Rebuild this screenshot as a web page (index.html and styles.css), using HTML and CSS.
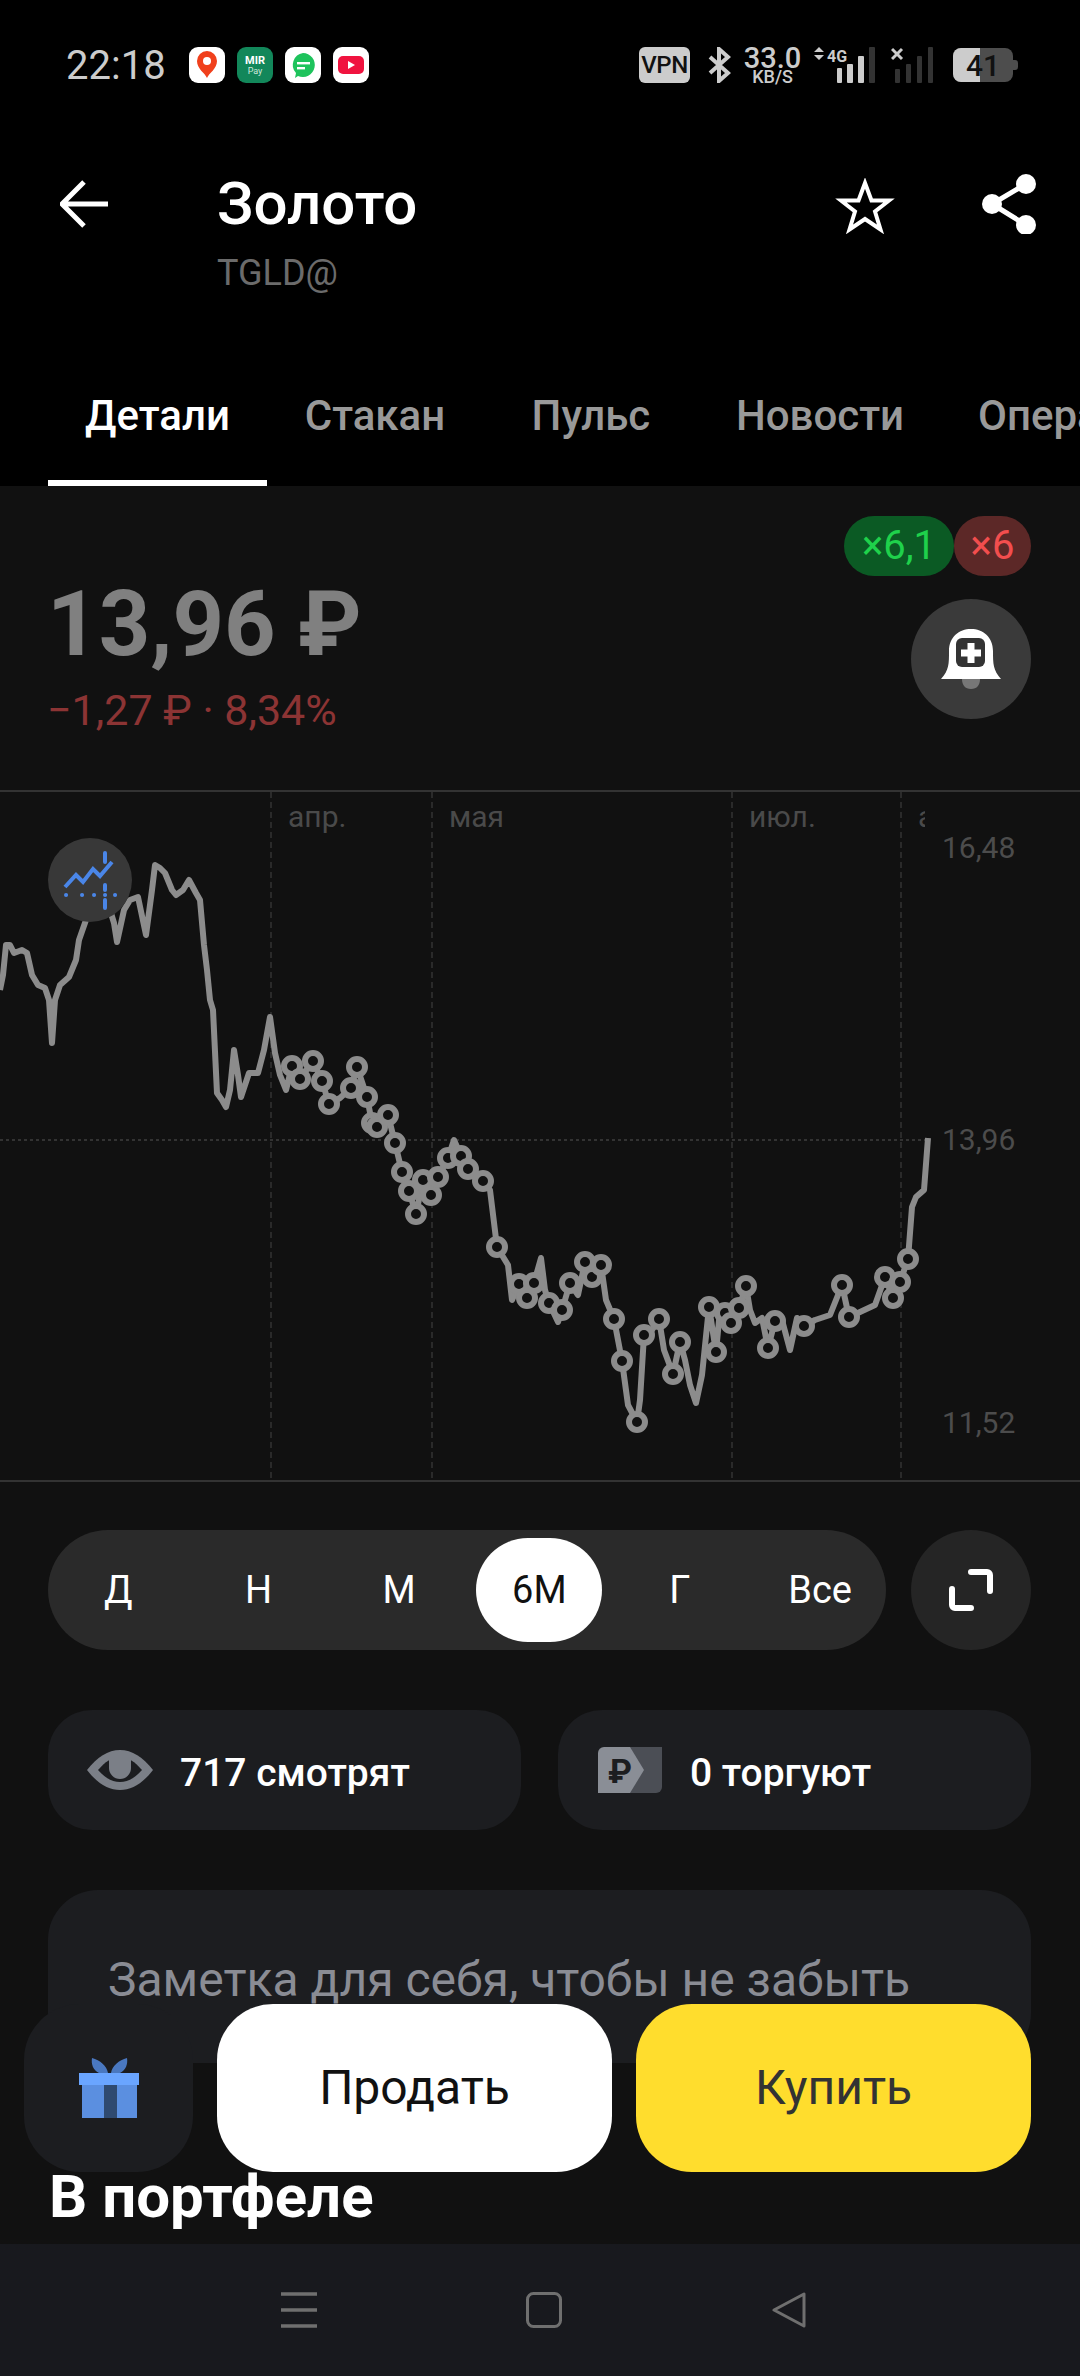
FILE: index.html
```html
<!DOCTYPE html>
<html>
<head>
  <meta charset="utf-8">
  <link rel="stylesheet" href="styles.css">
</head>
<body>
  <div class="screen">

    <div class="status-bar">
      <span class="time">22:18</span>
      <div class="app-icons">
        <div class="app-icon">
          <svg viewBox="0 0 36 36"><path d="M18 31c-2-5-10-9-10-17a10 10 0 0 1 20 0c0 8-8 12-10 17z" fill="#f0401c"/><circle cx="18" cy="14" r="4" fill="#fff"/></svg>
        </div>
        <div class="app-icon mir">
          <svg viewBox="0 0 36 36"><text x="18" y="17" class="mir-top">MIR</text><text x="18" y="27" class="mir-bottom">Pay</text></svg>
        </div>
        <div class="app-icon">
          <svg viewBox="0 0 36 36"><path d="M18 6a12 12 0 1 1-5 23l-3 2 1-5A12 12 0 0 1 18 6z" fill="#1ec35c"/><rect x="12" y="15" width="13" height="2.4" fill="#fff"/><rect x="12" y="20" width="8" height="2.4" fill="#fff"/></svg>
        </div>
        <div class="app-icon">
          <svg viewBox="0 0 36 36"><rect x="5" y="9" width="26" height="18" rx="5" fill="#f0133f"/><path d="M15 14l7 4-7 4z" fill="#fff"/></svg>
        </div>
      </div>
      <div class="sys-icons">
        <span class="vpn">VPN</span>
        <svg class="bt" viewBox="0 0 23 36"><path d="M2 10l18 16-9 8V2l9 8L2 26" fill="none" stroke="#ccc" stroke-width="4"/></svg>
        <div class="speed">
          <span class="speed-num">33.0</span>
          <span class="speed-unit">KB/S</span>
        </div>
        <svg class="signal" viewBox="0 0 62 36">
          <path d="M0 5l5-5 5 5zM0 8l5 5 5-5z" fill="#ccc"/>
          <text x="13" y="15" class="net">4G</text>
          <rect x="23" y="21" width="5" height="15" rx="1" fill="#ccc"/>
          <rect x="33" y="17" width="6" height="19" rx="1" fill="#ccc"/>
          <rect x="44" y="9" width="6" height="27" rx="1" fill="#ccc"/>
          <rect x="55" y="0" width="6" height="36" rx="1" fill="#333"/>
        </svg>
        <svg class="signal-off" viewBox="0 0 42 36">
          <path d="M1 2l10 10M11 2L1 12" stroke="#ccc" stroke-width="3"/>
          <rect x="4" y="22" width="5" height="14" rx="1" fill="#333"/>
          <rect x="15" y="17" width="5" height="19" rx="1" fill="#333"/>
          <rect x="26" y="9" width="5" height="27" rx="1" fill="#333"/>
          <rect x="37" y="0" width="5" height="36" rx="1" fill="#333"/>
        </svg>
        <div class="battery">
          <div class="battery-fill"></div>
          <span class="battery-num">41</span>
        </div>
      </div>
    </div>

    <div class="toolbar">
      <svg class="back" viewBox="0 0 48 48"><path d="M48 24H3M24 2L2 24l22 22" fill="none" stroke="#fff" stroke-width="5"/></svg>
      <div class="titles">
        <div class="title">Золото</div>
        <div class="ticker">TGLD@</div>
      </div>
      <svg class="star" viewBox="0 0 60 56"><path d="M30 5l6.500 17.500h17.500L40 33.500l5.500 18L30 41l-15.500 10.500 5.500-18L6 22.500h17.500z" fill="none" stroke="#fff" stroke-width="4"/></svg>
      <svg class="share" viewBox="0 0 56 60"><path d="M45 10L11 30l34 21" fill="none" stroke="#fff" stroke-width="5"/><circle cx="45" cy="10" r="10" fill="#fff"/><circle cx="11" cy="30" r="10" fill="#fff"/><circle cx="45" cy="51" r="10" fill="#fff"/></svg>
    </div>

    <div class="tabs">
      <div class="tab active">Детали</div>
      <div class="tab">Стакан</div>
      <div class="tab">Пульс</div>
      <div class="tab">Новости</div>
      <div class="tab">Операции</div>
    </div>

    <div class="quote">
      <div class="prices">
        <div class="price">13,96 ₽</div>
        <div class="change">−1,27 ₽ · 8,34%</div>
      </div>
      <div class="quote-side">
        <div class="badges">
          <span class="badge long">×6,1</span>
          <span class="badge short">×6</span>
        </div>
        <div class="round-btn bell">
          <svg viewBox="0 0 60 60">
            <path d="M0 50C8 41 8 35 8 22 8 8 18 0 30 0s22 8 22 22c0 13 0 19 8 28z" fill="#fff"/>
            <rect x="15" y="9" width="29" height="29" rx="6" fill="#333"/>
            <path d="M30 14v20M20 24h20" stroke="#fff" stroke-width="7"/>
            <path d="M21 50h18c0 6-3 10-9 10s-9-4-9-10z" fill="#777"/>
          </svg>
        </div>
      </div>
    </div>

    <div class="chart">
      <svg viewBox="0 792 1080 688">
        <g class="grid-line">
          <line x1="271" y1="792" x2="271" y2="1480"/>
          <line x1="432" y1="792" x2="432" y2="1480"/>
          <line x1="732" y1="792" x2="732" y2="1480"/>
          <line x1="901" y1="792" x2="901" y2="1480"/>
          <line class="dots" x1="0" y1="1140" x2="925" y2="1140"/>
        </g>
        <g class="month">
          <text x="288" y="827">апр.</text>
          <text x="449" y="827">мая</text>
          <text x="749" y="827">июл.</text>
        </g>
        <svg x="918" y="792" width="7" height="60" viewBox="918 792 7 60"><text x="918" y="827" class="month-cut">а</text></svg>
        <g class="axis">
          <text x="942" y="858">16,48</text>
          <text x="942" y="1150">13,96</text>
          <text x="942" y="1433">11,52</text>
        </g>
        <polyline class="line" points="0,990 3,975 6,945 10,945 14,953 22,950 27,953 32,975 38,985 45,988 49,1000 52,1043 55,1000 60,985 69,977 76,960 79,940 86,920 100,905 110,910 114,923 117,942 124,910 130,900 138,897 146,935 152,890 155,865 160,868 165,873 172,890 176,895 183,890 189,880 196,893 200,900 204,945 207,970 210,1000 213,1010 217,1093 222,1100 226,1107 230,1090 234,1050 238,1075 241,1097 245,1085 249,1073 258,1073 264,1050 270,1017 275,1053 280,1075 286,1090 292,1066 300,1079 313,1061 322,1081 329,1104 340,1098 351,1088 357,1067 367,1097 372,1123 377,1127 388,1115 395,1143 402,1172 409,1191 416,1214 423,1180 431,1195 438,1177 448,1158 454,1140 461,1156 468,1169 483,1181 490,1190 497,1247 508,1265 512,1300 519,1284 527,1298 534,1283 541,1258 545,1290 549,1303 558,1322 562,1310 570,1283 578,1295 585,1262 592,1277 601,1265 606,1300 614,1319 618,1340 622,1361 628,1405 637,1422 640,1400 644,1335 652,1330 659,1319 664,1350 673,1374 680,1342 685,1360 690,1385 696,1403 702,1375 709,1307 716,1352 720,1310 725,1313 731,1323 739,1308 746,1286 750,1310 755,1323 762,1318 768,1348 775,1321 782,1320 790,1350 797,1318 804,1326 815,1320 830,1315 842,1285 849,1317 860,1312 875,1305 885,1277 893,1298 900,1282 908,1259 912,1207 916,1197 924,1190 928,1138"/>
        <g class="marks">
          <circle cx="292" cy="1066" r="8"/><circle cx="300" cy="1079" r="8"/><circle cx="313" cy="1061" r="8"/><circle cx="322" cy="1081" r="8"/>
          <circle cx="329" cy="1104" r="8"/><circle cx="351" cy="1088" r="8"/><circle cx="357" cy="1067" r="8"/><circle cx="367" cy="1097" r="8"/>
          <circle cx="372" cy="1123" r="8"/><circle cx="377" cy="1127" r="8"/><circle cx="388" cy="1115" r="8"/><circle cx="395" cy="1143" r="8"/>
          <circle cx="402" cy="1172" r="8"/><circle cx="409" cy="1191" r="8"/><circle cx="416" cy="1214" r="8"/><circle cx="423" cy="1180" r="8"/>
          <circle cx="431" cy="1195" r="8"/><circle cx="438" cy="1177" r="8"/><circle cx="448" cy="1158" r="8"/><circle cx="461" cy="1156" r="8"/>
          <circle cx="468" cy="1169" r="8"/><circle cx="483" cy="1181" r="8"/><circle cx="497" cy="1247" r="8"/><circle cx="519" cy="1284" r="8"/>
          <circle cx="527" cy="1298" r="8"/><circle cx="534" cy="1283" r="8"/><circle cx="549" cy="1303" r="8"/><circle cx="562" cy="1310" r="8"/>
          <circle cx="570" cy="1283" r="8"/><circle cx="585" cy="1262" r="8"/><circle cx="592" cy="1277" r="8"/><circle cx="601" cy="1265" r="8"/>
          <circle cx="614" cy="1319" r="8"/><circle cx="622" cy="1361" r="8"/><circle cx="637" cy="1422" r="8"/><circle cx="644" cy="1335" r="8"/>
          <circle cx="659" cy="1319" r="8"/><circle cx="673" cy="1374" r="8"/><circle cx="680" cy="1342" r="8"/><circle cx="709" cy="1307" r="8"/>
          <circle cx="716" cy="1352" r="8"/><circle cx="725" cy="1313" r="8"/><circle cx="731" cy="1323" r="8"/><circle cx="739" cy="1308" r="8"/>
          <circle cx="746" cy="1286" r="8"/><circle cx="768" cy="1348" r="8"/><circle cx="775" cy="1321" r="8"/><circle cx="804" cy="1326" r="8"/>
          <circle cx="842" cy="1285" r="8"/><circle cx="849" cy="1317" r="8"/><circle cx="885" cy="1277" r="8"/><circle cx="893" cy="1298" r="8"/>
          <circle cx="900" cy="1282" r="8"/><circle cx="908" cy="1259" r="8"/>
        </g>
        <circle cx="90" cy="880" r="42" fill="#383838"/>
        <polyline class="trend" points="65,887 76,875 83,882 93,869 100,876 112,862"/>
        <path class="trend-dots" d="M105 853v9M105 885v5M105 900v8M66 895h.1M82 895h.1M94 895h.1M105 895h.1M115 895h.1"/>
      </svg>
    </div>

    <div class="range-row">
      <div class="periods">
        <div class="period">Д</div>
        <div class="period">Н</div>
        <div class="period">М</div>
        <div class="period active"><span>6М</span></div>
        <div class="period">Г</div>
        <div class="period">Все</div>
      </div>
      <div class="round-btn expand">
        <svg viewBox="0 0 44 42"><path d="M22 3h16a3 3 0 0 1 3 3v16M3 20v16a3 3 0 0 0 3 3h16" fill="none" stroke="#fff" stroke-width="6" stroke-linecap="round"/></svg>
      </div>
    </div>

    <div class="stats">
      <div class="stat">
        <svg class="eye" viewBox="0 0 66 40">
          <path d="M0 20C10 7 21 0 33 0s23 7 33 20C56 33 45 40 33 40S10 33 0 20z" fill="#7b7f87"/>
          <path d="M11 20c7-8 14-13 22-13s15 5 22 13c-7 8-14 12-22 12s-15-4-22-12z" fill="#1c1d20"/>
          <path d="M22 5h22v13a11 11 0 0 1-22 0z" fill="#7b7f87"/>
        </svg>
        <span>717 смотрят</span>
      </div>
      <div class="stat">
        <svg class="rub" viewBox="0 0 64 46">
          <path d="M20 0h44v40a6 6 0 0 1-6 6H20z" fill="#4b4e55"/>
          <path d="M0 6a6 6 0 0 1 6-6h26l14 23-14 23H0z" fill="#8a8e96"/>
          <text x="10" y="36" class="rub-sign">₽</text>
        </svg>
        <span>0 торгуют</span>
      </div>
    </div>

    <div class="note">Заметка для себя, чтобы не забыть</div>

    <h2 class="section-title">В портфеле</h2>

    <div class="actions">
      <div class="gift-btn">
        <svg viewBox="0 0 60 60">
          <path d="M13 0c8 2 15 8 16 15h-9C14 12 12 6 13 0zM48 0c-8 2-15 8-16 15h9c6-3 8-9 7-15z" fill="#4a78c0"/>
          <rect x="3" y="27" width="55" height="33" fill="#5b8fe0"/>
          <rect x="25" y="27" width="13" height="33" fill="#2f4a70"/>
          <rect y="15" width="60" height="12" fill="#6aa5ff"/>
        </svg>
      </div>
      <div class="action sell">Продать</div>
      <div class="action buy">Купить</div>
    </div>

    <div class="nav-bar">
      <svg viewBox="0 0 36 36"><path d="M0 2h36M0 18h36M0 34h36" stroke="#6f6f6f" stroke-width="3.5"/></svg>
      <svg viewBox="0 0 36 36"><rect x="1.5" y="1.5" width="33" height="33" rx="6" fill="none" stroke="#6f6f6f" stroke-width="3"/></svg>
      <svg viewBox="0 0 36 36"><path d="M33 2v32L3 18z" fill="none" stroke="#6f6f6f" stroke-width="3" stroke-linejoin="round"/></svg>
    </div>

  </div>
</body>
</html>
```

FILE: styles.css
```css
* {
  box-sizing: border-box;
}

body {
  margin: 0;
  background-color: #000;
  font-family: Roboto, "Noto Sans", sans-serif;
  color: #fff;
}

.screen {
  position: relative;
  width: 1080px;
  height: 2376px;
  overflow: hidden;
  background-color: #111;
}

/* status bar */

.status-bar {
  display: flex;
  align-items: center;
  height: 130px;
  padding: 0 62px 0 66px;
  background-color: #000;
}

.time {
  width: 123px;
  font-size: 40px;
  color: #ccc;
}

.app-icons {
  display: flex;
  gap: 12px;
}

.app-icon {
  width: 36px;
  height: 36px;
  border-radius: 9px;
  background-color: #fff;
}

.app-icon svg {
  display: block;
}

.app-icon.mir {
  background-color: #12875a;
}

.mir-top {
  font-size: 11px;
  font-weight: 700;
  fill: #fff;
  text-anchor: middle;
}

.mir-bottom {
  font-size: 9px;
  fill: #cfe8dc;
  text-anchor: middle;
}

.sys-icons {
  display: flex;
  align-items: center;
  margin-left: auto;
}

.vpn {
  width: 51px;
  height: 36px;
  border-radius: 6px;
  background-color: #ccc;
  color: #111;
  font-size: 24px;
  font-weight: 500;
  line-height: 36px;
  text-align: center;
  letter-spacing: -0.5px;
}

.bt {
  width: 23px;
  height: 36px;
  margin-left: 18px;
}

.speed {
  display: flex;
  flex-direction: column;
  align-items: center;
  width: 55px;
  margin-left: 14px;
  color: #ccc;
}

.speed-num {
  font-size: 29px;
  font-weight: 500;
  line-height: 24px;
}

.speed-unit {
  font-size: 18px;
  font-weight: 500;
  line-height: 14px;
}

.signal {
  width: 62px;
  height: 36px;
  margin-left: 14px;
}

.net {
  font-size: 16px;
  font-weight: 700;
  fill: #ccc;
}

.signal-off {
  width: 42px;
  height: 36px;
  margin-left: 15px;
}

.battery {
  position: relative;
  display: flex;
  align-items: center;
  justify-content: center;
  width: 60px;
  height: 34px;
  margin-left: 20px;
  margin-right: 5px;
  border-radius: 8px;
  background-color: #4d4d4d;
  color: #111;
  font-size: 30px;
  font-weight: 500;
}

.battery::after {
  content: "";
  position: absolute;
  left: 60px;
  top: 12px;
  width: 5px;
  height: 10px;
  border-radius: 0 3px 3px 0;
  background-color: #4d4d4d;
}

.battery-fill {
  position: absolute;
  left: 0;
  top: 0;
  bottom: 0;
  width: 27px;
  border-radius: 8px 0 0 8px;
  background-color: #ccc;
}

.battery-num {
  position: relative;
}

/* toolbar */

.toolbar {
  display: flex;
  align-items: flex-start;
  height: 230px;
  padding: 43px 43px 0 60px;
  background-color: #000;
}

.back {
  width: 48px;
  height: 48px;
  margin-top: 7px;
}

.titles {
  margin-left: 109px;
}

.title {
  font-size: 60px;
  font-weight: 500;
  line-height: 62px;
}

.ticker {
  margin-top: 16px;
  font-size: 36px;
  line-height: 44px;
  color: #6b6b6b;
}

.star {
  width: 60px;
  height: 56px;
  margin-top: 5px;
  margin-left: auto;
}

.share {
  width: 56px;
  height: 60px;
  margin-top: 1px;
  margin-left: 86px;
}

/* tabs */

.tabs {
  display: flex;
  height: 126px;
  padding-left: 48px;
  background-color: #000;
}

.tab {
  flex-shrink: 0;
  min-width: 216px;
  height: 126px;
  padding: 0 37px;
  font-size: 42px;
  font-weight: 500;
  line-height: 112px;
  text-align: center;
  color: #999;
}

.tab.active {
  border-bottom: 6px solid #fff;
  color: #fff;
}

/* price block */

.quote {
  display: flex;
  justify-content: space-between;
  height: 304px;
  padding: 30px 49px 0 47px;
}

.prices {
  padding-top: 54px;
}

.price {
  font-size: 90px;
  font-weight: 700;
  line-height: 110px;
  color: #808080;
}

.change {
  margin-top: 6px;
  font-size: 43px;
  line-height: 48px;
  color: #8c3434;
}

.quote-side {
  display: flex;
  flex-direction: column;
  align-items: flex-end;
  gap: 23px;
}

.badges {
  display: flex;
}

.badge {
  height: 60px;
  border-radius: 30px;
  font-size: 40px;
  line-height: 60px;
  text-align: center;
}

.badge.long {
  width: 110px;
  background-color: #0b5a24;
  color: #1fd14b;
}

.badge.short {
  width: 77px;
  background-color: #5c2827;
  color: #f24e4e;
}

.round-btn {
  display: flex;
  align-items: center;
  justify-content: center;
  width: 120px;
  height: 120px;
  border-radius: 50%;
}

.bell {
  background-color: #3a3a3a;
}

.bell svg {
  width: 60px;
  height: 60px;
}

/* chart */

.chart {
  height: 692px;
  border-top: 2px solid #333;
  border-bottom: 2px solid #333;
}

.chart svg {
  display: block;
}

.chart > svg {
  width: 1080px;
  height: 688px;
}

.grid-line line {
  stroke: #2a2a2a;
  stroke-width: 2;
  stroke-dasharray: 6 4;
}

.grid-line line.dots {
  stroke: #333;
  stroke-dasharray: 3 3;
}

.month text,
.month-cut {
  font-size: 30px;
  fill: #4a4a4a;
}

.axis text {
  font-size: 30px;
  fill: #4c4c4c;
}

.line {
  fill: none;
  stroke: #8c8c8c;
  stroke-width: 6;
  stroke-linejoin: round;
}

.marks circle {
  fill: #111;
  stroke: #8c8c8c;
  stroke-width: 6;
}

.trend {
  fill: none;
  stroke: #4a86e8;
  stroke-width: 4;
}

.trend-dots {
  fill: none;
  stroke: #4a86e8;
  stroke-width: 4;
  stroke-linecap: round;
}

/* period switch */

.range-row {
  display: flex;
  justify-content: space-between;
  margin-top: 48px;
  padding: 0 49px 0 48px;
}

.periods {
  display: grid;
  grid-template-columns: repeat(6, 140.400px);
  width: 838px;
  height: 120px;
  border-radius: 60px;
  background-color: #2a2a2a;
}

.period {
  display: flex;
  align-items: center;
  justify-content: center;
  font-size: 38px;
}

.period.active span {
  width: 126px;
  height: 104px;
  border-radius: 52px;
  background-color: #fff;
  color: #111;
  line-height: 104px;
  text-align: center;
}

.expand {
  background-color: #252525;
}

.expand svg {
  width: 44px;
  height: 42px;
}

/* viewers and traders */

.stats {
  display: grid;
  grid-template-columns: 1fr 1fr;
  gap: 37px;
  margin-top: 60px;
  padding: 0 49px 0 48px;
}

.stat {
  display: flex;
  align-items: center;
  height: 120px;
  padding-left: 40px;
  border-radius: 44px;
  background-color: #1c1d20;
  font-size: 39px;
  font-weight: 500;
}

.stat span {
  padding-top: 6px;
}

.eye {
  width: 66px;
  height: 40px;
  margin-left: -1px;
  margin-right: 27px;
}

.rub {
  width: 64px;
  height: 46px;
  margin-right: 28px;
}

.rub-sign {
  font-size: 34px;
  font-weight: 700;
  fill: #1c1d20;
}

/* note */

.note {
  height: 173px;
  margin: 60px 49px 0 48px;
  padding-left: 60px;
  border-radius: 50px;
  background-color: #1c1d20;
  font-size: 48px;
  line-height: 179px;
  color: #8a8c94;
}

.section-title {
  margin: 102px 0 0 49px;
  font-size: 60px;
  font-weight: 700;
  line-height: 64px;
}

/* floating buttons */

.actions {
  position: absolute;
  left: 24px;
  top: 2004px;
  display: flex;
  gap: 24px;
}

.gift-btn {
  display: flex;
  align-items: center;
  justify-content: center;
  width: 169px;
  height: 168px;
  border-radius: 56px;
  background-color: #1c1d20;
}

.gift-btn svg {
  width: 60px;
  height: 60px;
}

.action {
  width: 395px;
  height: 168px;
  border-radius: 56px;
  font-size: 48px;
  line-height: 168px;
  text-align: center;
}

.sell {
  background-color: #fff;
  color: #111;
}

.buy {
  background-color: #ffdd2d;
  color: #333;
}

/* system navigation */

.nav-bar {
  position: absolute;
  left: 0;
  right: 0;
  bottom: 0;
  display: flex;
  align-items: center;
  justify-content: center;
  gap: 209px;
  height: 132px;
  padding-left: 7px;
  background-color: #18191e;
}

.nav-bar svg {
  width: 36px;
  height: 36px;
}
```
